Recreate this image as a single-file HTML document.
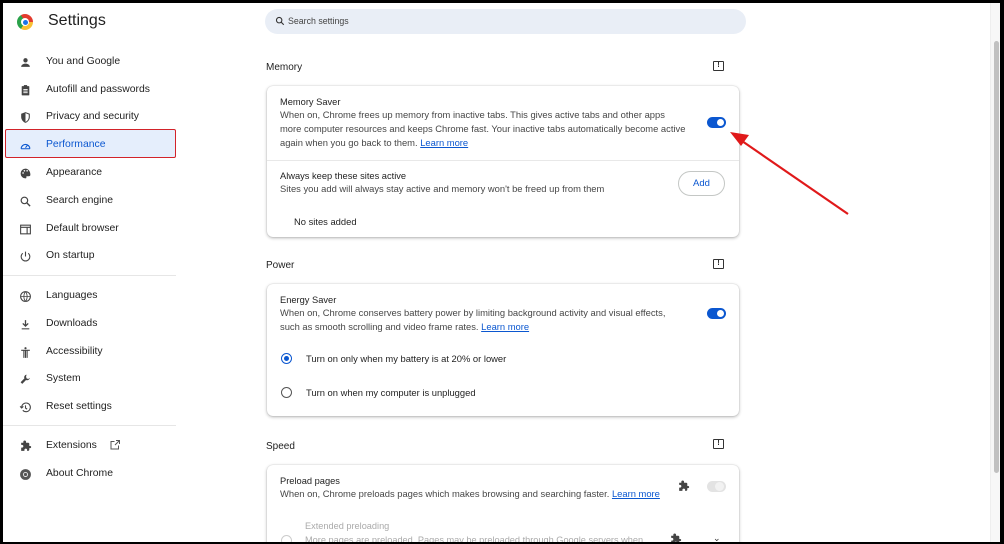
<!DOCTYPE html>
<html><head><meta charset="utf-8"><style>
*{box-sizing:border-box;margin:0;padding:0}
body{width:1004px;height:544px;overflow:hidden;background:#000;font-family:"Liberation Sans",sans-serif;color:#1f1f1f;position:relative}
#pg{position:absolute;left:3px;top:3px;width:997px;height:539px;background:#fff;overflow:hidden}
.a{position:absolute;white-space:nowrap}
.nav{position:absolute;left:43px;font-size:10.4px;color:#1f1f1f;margin-top:2px}
.ic{position:absolute;left:16px;width:13px;height:13px;margin-top:1px}
.card{position:absolute;left:264px;width:472px;background:#fff;border-radius:6px;box-shadow:0 1px 3px rgba(0,0,0,.3),0 0 1px rgba(0,0,0,.2)}
.t{font-size:9.3px;color:#1f1f1f}
.s{font-size:9.4px;color:#474747;line-height:14px}
.lm{color:#0b57d0;text-decoration:underline}
.tg{position:absolute;width:19px;height:11px;border-radius:6px;background:#0b57d0}
.tg:after{content:"";position:absolute;right:2px;top:2px;width:7px;height:7px;border-radius:50%;background:#fff}
.h{position:absolute;left:263px;font-size:10px;color:#1f1f1f}
.fb{position:absolute;left:710px;width:11px;height:10px;border:1.3px solid #333;border-radius:1px;font-size:7px;font-weight:bold;text-align:center;line-height:8px}
</style></head><body><div id="pg">
<div class="a" style="left:14px;top:11px;width:16px;height:16px;border-radius:50%;background:conic-gradient(from -30deg,#e33b2e 0 120deg,#f9c034 120deg 240deg,#2aa24a 240deg 360deg)"></div>
<div class="a" style="left:18px;top:15px;width:8px;height:8px;border-radius:50%;background:#fff"></div>
<div class="a" style="left:19.5px;top:16.5px;width:5px;height:5px;border-radius:50%;background:#1a73e8"></div>
<div class="a" style="left:45px;top:9px;font-size:16px;color:#1f1f1f">Settings</div>

<div class="a" style="left:2px;top:126px;width:171px;height:29px;background:#e5eefc;border:1.5px solid #d2232a;border-radius:2px"></div>
<svg class="ic" style="top:52px" viewBox="0 0 24 24"><circle cx="12" cy="8" r="4" fill="#444"/><path d="M4 20c0-4 4-6 8-6s8 2 8 6z" fill="#444"/></svg>
<div class="nav" style="top:51px">You and Google</div>
<svg class="ic" style="top:80px" viewBox="0 0 24 24"><rect x="5" y="4" width="14" height="17" rx="1" fill="#444"/><rect x="9" y="2" width="6" height="4" fill="#444"/><path d="M8 10h8M8 13h8M8 16h8" stroke="#fff" stroke-width="1.5"/></svg>
<div class="nav" style="top:79px">Autofill and passwords</div>
<svg class="ic" style="top:107px" viewBox="0 0 24 24"><path d="M12 2l8 3v6c0 5-3.5 9-8 11-4.5-2-8-6-8-11V5z" fill="#444"/><path d="M12 4v16c3.5-1.7 6-5 6-9V6.5zM6 12h6" fill="#fff"/></svg>
<div class="nav" style="top:106px">Privacy and security</div>
<svg class="ic" style="top:135px" viewBox="0 0 24 24"><path d="M4 18a8 8 0 1 1 16 0" fill="none" stroke="#0b57d0" stroke-width="2"/><path d="M4 18h16M12 16l4-5" stroke="#0b57d0" stroke-width="2"/></svg>
<div class="nav" style="top:134px;color:#0b57d0">Performance</div>
<svg class="ic" style="top:163px" viewBox="0 0 24 24"><path d="M12 3a9 9 0 0 0 0 18c1.5 0 2-1 1.5-2s0-2 1.5-2H18a3 3 0 0 0 3-3c0-6-4-11-9-11z" fill="#444"/><circle cx="7.5" cy="11" r="1.5" fill="#fff"/><circle cx="10" cy="7" r="1.5" fill="#fff"/><circle cx="15" cy="7" r="1.5" fill="#fff"/></svg>
<div class="nav" style="top:162px">Appearance</div>
<svg class="ic" style="top:191px" viewBox="0 0 24 24"><circle cx="10" cy="10" r="6" fill="none" stroke="#444" stroke-width="2.2"/><path d="M14.5 14.5l6 6" stroke="#444" stroke-width="2.5"/></svg>
<div class="nav" style="top:190px">Search engine</div>
<svg class="ic" style="top:219px" viewBox="0 0 24 24"><rect x="3" y="4" width="18" height="16" fill="none" stroke="#444" stroke-width="2"/><path d="M3 8h18M15 8v12" stroke="#444" stroke-width="2"/></svg>
<div class="nav" style="top:218px">Default browser</div>
<svg class="ic" style="top:246px" viewBox="0 0 24 24"><path d="M12 3v9" stroke="#444" stroke-width="2"/><path d="M7 6a8 8 0 1 0 10 0" fill="none" stroke="#444" stroke-width="2"/></svg>
<div class="nav" style="top:245px">On startup</div>
<div class="a" style="left:0;top:272px;width:173px;height:1px;background:#e6e6e6"></div>
<svg class="ic" style="top:286px" viewBox="0 0 24 24"><circle cx="12" cy="12" r="9" fill="none" stroke="#444" stroke-width="2"/><path d="M3 12h18M12 3c-4 5-4 13 0 18M12 3c4 5 4 13 0 18" fill="none" stroke="#444" stroke-width="1.6"/></svg>
<div class="nav" style="top:285px">Languages</div>
<svg class="ic" style="top:314px" viewBox="0 0 24 24"><path d="M12 4v10M7 10l5 5 5-5" fill="none" stroke="#444" stroke-width="2.4"/><path d="M5 20h14" stroke="#444" stroke-width="2"/></svg>
<div class="nav" style="top:313px">Downloads</div>
<svg class="ic" style="top:342px" viewBox="0 0 24 24"><circle cx="12" cy="4" r="2" fill="#444"/><path d="M4 8h16M12 8v14M9 8v14M15 8v14" stroke="#444" stroke-width="2"/></svg>
<div class="nav" style="top:341px">Accessibility</div>
<svg class="ic" style="top:369px" viewBox="0 0 24 24"><path d="M14 3a5 5 0 0 0-4 7L3 17l3 3 7-7a5 5 0 0 0 7-4l-3 2-3-1-1-3z" fill="#444"/></svg>
<div class="nav" style="top:368px">System</div>
<svg class="ic" style="top:397px" viewBox="0 0 24 24"><path d="M5 12a8 8 0 1 1 2 5" fill="none" stroke="#444" stroke-width="2"/><path d="M2 10l3 3 3-3" fill="none" stroke="#444" stroke-width="2"/><path d="M12 8v5l3 2" fill="none" stroke="#444" stroke-width="2"/></svg>
<div class="nav" style="top:396px">Reset settings</div>
<div class="a" style="left:0;top:422px;width:173px;height:1px;background:#e6e6e6"></div>
<svg class="ic" style="top:436px" viewBox="0 0 24 24"><path d="M20.5 11H19V7a2 2 0 0 0-2-2h-4V3.5a2.5 2.5 0 0 0-5 0V5H4v4h1.5a2.5 2.5 0 0 1 0 5H4v6h6v-1.5a2.5 2.5 0 0 1 5 0V20h2a2 2 0 0 0 2-2v-3h1.5a2 2 0 0 0 0-4z" fill="#444"/></svg>
<div class="nav" style="top:435px">Extensions</div>
<svg class="a" style="left:106px;top:436px;width:12px;height:12px" viewBox="0 0 24 24"><path d="M19 13v7H4V5h7" fill="none" stroke="#555" stroke-width="2"/><path d="M14 3h7v7M21 3l-9 9" fill="none" stroke="#555" stroke-width="2"/></svg>
<svg class="ic" style="top:464px" viewBox="0 0 24 24"><circle cx="12" cy="12" r="10" fill="#555"/><circle cx="12" cy="12" r="4.5" fill="#fff"/><circle cx="12" cy="12" r="3" fill="#555"/></svg>
<div class="nav" style="top:463px">About Chrome</div>

<div class="a" style="left:262px;top:6px;width:481px;height:25px;border-radius:13px;background:#e9eef6"></div>
<svg class="a" style="left:272px;top:13px;width:10px;height:10px" viewBox="0 0 24 24"><circle cx="10" cy="10" r="6.5" fill="none" stroke="#333" stroke-width="2.6"/><path d="M15 15l6 6" stroke="#333" stroke-width="2.8"/></svg>
<div class="a" style="left:285px;top:13px;font-size:8.8px;color:#444">Search settings</div>

<div class="h" style="top:59px">Memory</div>
<div class="fb" style="top:58px">!</div>
<div class="card" style="top:83px;height:151px">
 <div class="a t" style="left:13px;top:11px">Memory Saver</div>
 <div class="a s" style="left:13px;top:22px">When on, Chrome frees up memory from inactive tabs. This gives active tabs and other apps<br>more computer resources and keeps Chrome fast. Your inactive tabs automatically become active<br>again when you go back to them. <span class="lm">Learn more</span></div>
 <div class="tg" style="left:440px;top:31px"></div>
 <div class="a" style="left:0;top:74px;width:472px;height:1px;background:#e8e8e8"></div>
 <div class="a t" style="left:13px;top:85px">Always keep these sites active</div>
 <div class="a s" style="left:13px;top:96px">Sites you add will always stay active and memory won't be freed up from them</div>
 <div class="a" style="left:411px;top:85px;width:47px;height:25px;border:1px solid #c4c7c5;border-radius:13px;font-size:9.5px;color:#0b57d0;text-align:center;line-height:23px">Add</div>
 <div class="a" style="left:27px;top:130px;font-size:9.4px;color:#1f1f1f">No sites added</div>
</div>

<div class="h" style="top:257px">Power</div>
<div class="fb" style="top:256px">!</div>
<div class="card" style="top:281px;height:132px">
 <div class="a t" style="left:13px;top:11px">Energy Saver</div>
 <div class="a s" style="left:13px;top:22px">When on, Chrome conserves battery power by limiting background activity and visual effects,<br>such as smooth scrolling and video frame rates. <span class="lm">Learn more</span></div>
 <div class="tg" style="left:440px;top:24px"></div>
 <div class="a" style="left:14px;top:69px;width:11px;height:11px;border-radius:50%;border:1.5px solid #0b57d0"></div>
 <div class="a" style="left:17px;top:72px;width:5px;height:5px;border-radius:50%;background:#0b57d0"></div>
 <div class="a t" style="left:39px;top:69px;font-size:9.4px">Turn on only when my battery is at 20% or lower</div>
 <div class="a" style="left:14px;top:103px;width:11px;height:11px;border-radius:50%;border:1.3px solid #555"></div>
 <div class="a t" style="left:39px;top:103px;font-size:9.4px">Turn on when my computer is unplugged</div>
</div>

<div class="h" style="top:438px">Speed</div>
<div class="fb" style="top:436px">!</div>
<div class="card" style="top:462px;height:100px">
 <div class="a t" style="left:13px;top:11px">Preload pages</div>
 <div class="a s" style="left:13px;top:22px">When on, Chrome preloads pages which makes browsing and searching faster. <span class="lm">Learn more</span></div>
 <svg class="a" style="left:410px;top:15px;width:13px;height:13px" viewBox="0 0 24 24"><path d="M20.5 11H19V7a2 2 0 0 0-2-2h-4V3.5a2.5 2.5 0 0 0-5 0V5H4v4h1.5a2.5 2.5 0 0 1 0 5H4v6h6v-1.5a2.5 2.5 0 0 1 5 0V20h2a2 2 0 0 0 2-2v-3h1.5a2 2 0 0 0 0-4z" fill="#444"/></svg>
 <div class="a" style="left:440px;top:16px;width:19px;height:11px;border-radius:6px;background:#e3e3e3"></div>
 <div class="a" style="left:448px;top:17px;width:9px;height:9px;border-radius:50%;background:#f2f2f2"></div>
 <div class="a" style="left:38px;top:56px;font-size:9.2px;color:#aaa">Extended preloading</div>
 <div class="a" style="left:38px;top:70px;font-size:9.2px;color:#aaa">More pages are preloaded. Pages may be preloaded through Google servers when</div>
 <div class="a" style="left:14px;top:70px;width:11px;height:11px;border-radius:50%;border:1px solid #ccc"></div>
 <svg class="a" style="left:402px;top:68px;width:13px;height:13px" viewBox="0 0 24 24"><path d="M20.5 11H19V7a2 2 0 0 0-2-2h-4V3.5a2.5 2.5 0 0 0-5 0V5H4v4h1.5a2.5 2.5 0 0 1 0 5H4v6h6v-1.5a2.5 2.5 0 0 1 5 0V20h2a2 2 0 0 0 2-2v-3h1.5a2 2 0 0 0 0-4z" fill="#444"/></svg>
 <div class="a" style="left:446px;top:68px;font-size:9px;color:#333">&#8964;</div>
</div>

<div class="a" style="left:987px;top:0;width:10px;height:539px;background:#f7f7f7;border-left:1px solid #eee"></div>
<div class="a" style="left:991px;top:38px;width:5px;height:432px;border-radius:3px;background:#c1c1c1"></div>

<svg class="a" style="left:0;top:0;width:997px;height:539px" viewBox="0 0 997 539"><path d="M845 211L739 138" stroke="#e0191a" stroke-width="2.2"/><path d="M727 129l19 3-8 11z" fill="#e0191a"/></svg>
</div></body></html>
